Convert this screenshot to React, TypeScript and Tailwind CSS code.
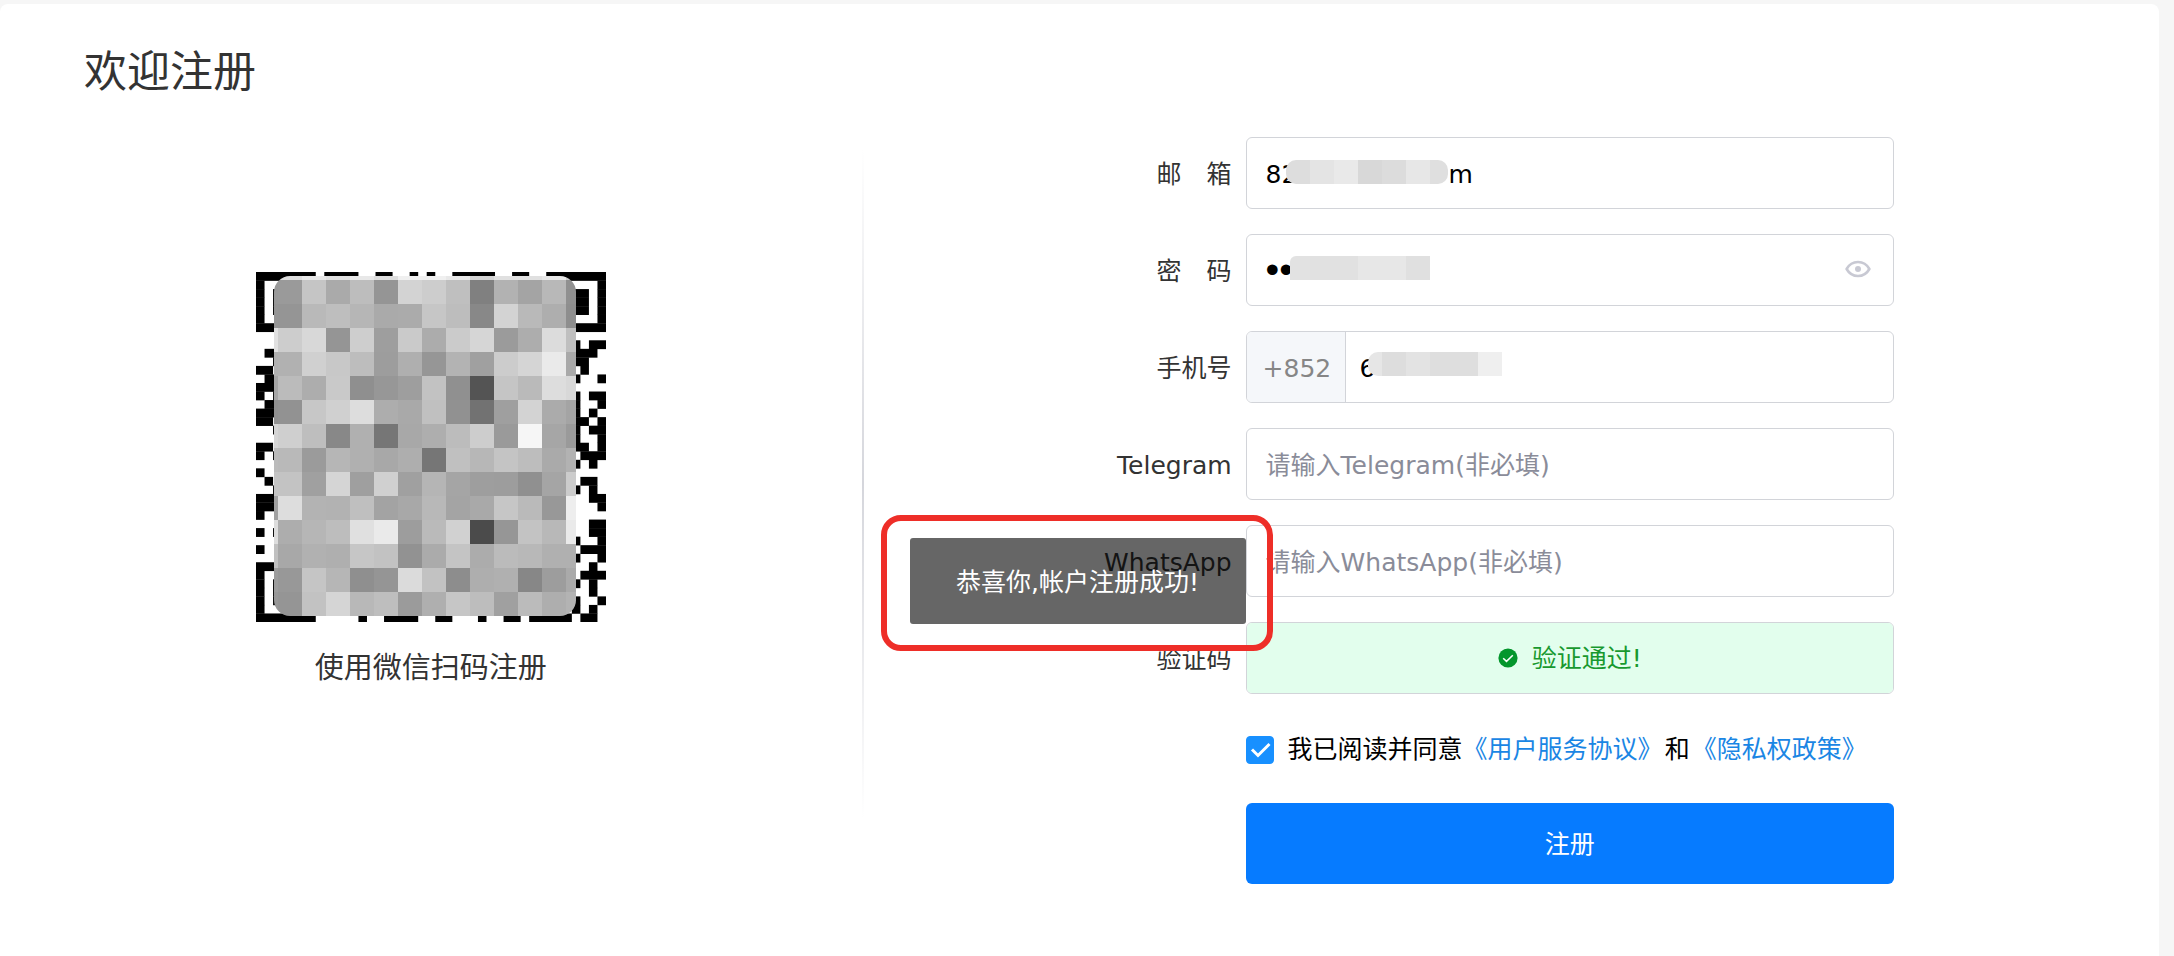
import { useState } from 'react';
import type { ReactNode } from 'react';

// QR modules that stay visible round the mosaic: [row, first column, length]
const QR_MODULES: [number, number, number][] = [
    [0, 0, 7], [0, 8, 4], [0, 14, 2], [0, 18, 1], [0, 20, 1], [0, 23, 5], [0, 30, 2], [0, 34, 7],
    [1, 0, 1], [1, 40, 1],
    [2, 0, 1], [2, 2, 1], [2, 37, 2], [2, 40, 1],
    [3, 0, 1], [3, 2, 1], [3, 37, 2], [3, 40, 1],
    [4, 0, 1], [4, 2, 1], [4, 37, 2], [4, 40, 1],
    [5, 0, 1], [5, 40, 1],
    [6, 0, 7], [6, 34, 7],
    [8, 37, 1], [8, 39, 2],
    [9, 1, 2], [9, 37, 3],
    [10, 2, 1], [10, 37, 2],
    [11, 0, 2], [11, 38, 1],
    [12, 1, 2], [12, 37, 1], [12, 40, 1],
    [13, 0, 3],
    [14, 0, 1], [14, 2, 1], [14, 37, 1], [14, 39, 2],
    [15, 1, 2], [15, 37, 1], [15, 40, 1],
    [16, 0, 3], [16, 37, 1], [16, 39, 1],
    [17, 0, 2], [17, 37, 2], [17, 40, 1],
    [18, 2, 1], [18, 37, 1], [18, 39, 2],
    [19, 37, 1], [19, 40, 1],
    [20, 0, 2], [20, 37, 2], [20, 40, 1],
    [21, 0, 1], [21, 2, 1], [21, 38, 3],
    [22, 37, 1], [22, 39, 1],
    [23, 0, 1],
    [24, 1, 1], [24, 38, 2],
    [25, 2, 1], [25, 37, 1], [25, 39, 1],
    [26, 0, 3], [26, 39, 2],
    [27, 0, 3], [27, 40, 1],
    [28, 0, 1],
    [29, 39, 2],
    [30, 0, 1], [30, 2, 1], [30, 39, 2],
    [31, 37, 1], [31, 40, 1],
    [32, 0, 1], [32, 38, 3],
    [33, 37, 1], [33, 40, 1],
    [34, 0, 7], [34, 39, 1],
    [35, 0, 1], [35, 38, 3],
    [36, 0, 1], [36, 2, 1], [36, 37, 1], [36, 39, 1],
    [37, 0, 1], [37, 2, 1], [37, 39, 1],
    [38, 0, 1], [38, 2, 1], [38, 37, 1], [38, 40, 1],
    [39, 0, 1], [39, 37, 1], [39, 39, 1],
    [40, 0, 7], [40, 12, 1], [40, 15, 4], [40, 21, 2], [40, 26, 1], [40, 29, 2], [40, 32, 5], [40, 38, 2],
];

// grey level of every mosaic cell, one row per line
const MOSAIC = [
    'dd dd e8 e0 e8 dd f0 f0 e8 d4 e0 e0 e8 cc',
    '99 9a c5 aa bd 95 d3 cd bf 80 b2 a4 b8 90',
    '96 95 b9 be b6 aa ab c6 bd 88 d3 b9 ae 8e',
    'e0 cd d8 95 ce 9e ca ac cb d6 9b ad dc bf',
    'b0 b1 d0 c8 bd 9d af 96 b3 a0 cc d5 ea a9',
    'a5 bb ad c9 8f 97 9e c2 90 54 c5 ba dd d8',
    '90 92 c7 d0 dd ad a9 c0 91 72 9f d3 ab a4',
    'd5 cf be 88 b0 76 a8 ae bc cd 9a f6 a6 9a',
    'bb b9 9b b6 b0 a8 ae 76 c0 b7 c4 bd aa b2',
    'c4 c3 a0 d5 9f d0 a0 b5 a5 9e 9d 90 a5 cc',
    'a0 dd b3 b2 bf a3 a8 b8 a4 a9 c6 ba 98 ee',
    'dd ad b6 bd e0 ea 9d ba d1 4b 96 c3 b8 ea',
    'c0 a8 b1 af c6 c2 92 ab c4 ac bb b8 b0 b0',
    '9d 98 c5 b6 8f 95 db c2 8d ae b0 87 9d aa',
    '98 95 c2 d5 b8 be 9b af c6 bd a0 bb ae b3',
].map((row) => row.split(' '));

const MODULE = 350 / 41;

const QrCode = () => (
    <svg viewBox="0 0 350 350" className="w-[350px] h-[350px]" role="img" aria-label="微信二维码">
        <defs>
            <clipPath id="mosaic">
                <rect x="18" y="4" width="302" height="340" rx="16" />
            </clipPath>
        </defs>
        {QR_MODULES.map(([row, col, len]) => (
            <rect
                key={`${row}-${col}`}
                x={col * MODULE}
                y={row * MODULE}
                width={len * MODULE}
                height={MODULE + 0.3}
                fill="#000"
            />
        ))}
        <g clipPath="url(#mosaic)" shapeRendering="crispEdges">
            {MOSAIC.map((row, r) =>
                row.map((grey, c) => (
                    <rect
                        key={`${r}-${c}`}
                        x={c * 24 - 2}
                        y={r * 24 - 16}
                        width="24"
                        height="24"
                        fill={`#${grey}${grey}${grey}`}
                    />
                ))
            )}
        </g>
    </svg>
);

const EyeIcon = () => (
    <svg viewBox="0 0 26 18" className="w-[26px] h-[18px]" fill="none">
        <path d="M1.600 9C4.400 4 8.400 2 13 2s8.600 2 11.400 7C21.600 14 17.600 16 13 16S4.400 14 1.600 9Z" stroke="#c8c9d3" strokeWidth="2.600" strokeLinejoin="round" />
        <circle cx="13" cy="9" r="3" fill="#c8c9d3" />
    </svg>
);

const PassedIcon = () => (
    <svg viewBox="0 0 20 20" className="w-5 h-5" fill="none">
        <circle cx="10" cy="10" r="9.600" fill="#04962c" />
        <path d="M5.200 10.200l3.300 3.200 6.300-6.200" stroke="#fff" strokeWidth="1.500" />
    </svg>
);

type FieldProps = {
    label: string;
    id: string;
    children: ReactNode;
};

const Field = ({ label, id, children }: FieldProps) => (
    <div className="flex items-center">
        <label htmlFor={id} className="w-[368px] mr-3.5 pt-1 shrink-0 text-right text-[#333]">
            {label}
        </label>
        <div className="relative flex flex-1 h-[72px] border border-[#d2d4d9] rounded-md overflow-hidden">
            {children}
        </div>
    </div>
);

const inputClass = 'flex-1 min-w-0 px-[19px] pt-1 bg-transparent text-black outline-none placeholder:text-[#8a8c99]';
// bigger bullets while the password is hidden
const hiddenClass = "flex-1 min-w-0 px-[19px] bg-transparent text-black outline-none font-['Liberation_Sans',sans-serif] text-[39px]";

const App = () => {
    const [email, setEmail] = useState('82' + ' '.repeat(19) + 'm');
    const [password, setPassword] = useState('123456789');
    const [phone, setPhone] = useState('6');
    const [showPassword, setShowPassword] = useState(false);
    const [agree, setAgree] = useState(true);

    return (
        <div className="flex min-h-screen bg-[#f6f6f6] pt-1 pr-[15px] font-['DejaVu_Sans','Noto_Sans_CJK_SC',sans-serif] text-[25px] leading-[30px]">
            <div className="flex-1 bg-white rounded-t-lg pt-[46px]">
                <h1 className="pl-[84px] text-[43px] leading-[44px] text-[#333]">欢迎注册</h1>

                <div className="flex mt-[43px]">
                    {/* WeChat */}
                    <div className="flex w-2/5">
                        <div className="flex flex-1 flex-col items-center pt-[135px]">
                            <QrCode />
                            <p className="mt-[31px] text-[29px] text-[#333]">使用微信扫码注册</p>
                        </div>
                        <div className="w-0.5 h-[670px] mt-3 bg-linear-to-b from-transparent via-[#d5d6dc] to-transparent"></div>
                    </div>

                    {/* Register form */}
                    <form className="relative flex-1 pr-[265px]" onSubmit={(e) => e.preventDefault()}>
                        <div className="flex flex-col gap-[25px]">
                            <Field label="邮　箱" id="email">
                                <input id="email" type="text" className={inputClass} value={email} onChange={(e) => setEmail(e.target.value)} />
                                <div className="absolute left-[39px] top-[22px] flex h-6 rounded-[10px] overflow-hidden">
                                    <span className="w-6 bg-[#dddddd]"></span>
                                    <span className="w-6 bg-[#e4e4e4]"></span>
                                    <span className="w-6 bg-[#e9e9e9]"></span>
                                    <span className="w-6 bg-[#d8d8d8]"></span>
                                    <span className="w-6 bg-[#dcdcdc]"></span>
                                    <span className="w-6 bg-[#e7e7e7]"></span>
                                    <span className="w-[18px] bg-[#dfdfdf]"></span>
                                </div>
                            </Field>
                            <Field label="密　码" id="password">
                                <input
                                    id="password"
                                    type={showPassword ? 'text' : 'password'}
                                    className={showPassword ? inputClass : hiddenClass}
                                    value={password}
                                    onChange={(e) => setPassword(e.target.value)}
                                />
                                <div className="absolute left-[43px] top-[21px] flex h-6 rounded-tl-md overflow-hidden">
                                    <span className="w-5 bg-[#e2e2e2]"></span>
                                    <span className="w-12 bg-[#e1e1e1]"></span>
                                    <span className="w-12 bg-[#e7e7e7]"></span>
                                    <span className="w-6 bg-[#e0e0e0]"></span>
                                </div>
                                <button type="button" aria-label="显示密码" className="pr-[22px] pb-0.5" onClick={() => setShowPassword(!showPassword)}>
                                    <EyeIcon />
                                </button>
                            </Field>
                            <Field label="手机号" id="phone">
                                <span className="flex items-center w-[99px] pl-4 pt-1 bg-[#f5f7fa] border-r border-[#d2d4d9] text-[#868686]">+852</span>
                                <input id="phone" type="tel" className="flex-1 min-w-0 px-3.5 pt-1 bg-transparent text-black outline-none" value={phone} onChange={(e) => setPhone(e.target.value)} />
                                <div className="absolute left-[121px] top-5 flex h-6 rounded-l-[10px] overflow-hidden">
                                    <span className="w-3.5 bg-[#e6e6e6]"></span>
                                    <span className="w-6 bg-[#dddddd]"></span>
                                    <span className="w-6 bg-[#e3e3e3]"></span>
                                    <span className="w-12 bg-[#dedede]"></span>
                                    <span className="w-6 bg-[#efefef]"></span>
                                </div>
                            </Field>
                            <Field label="Telegram" id="telegram">
                                <input id="telegram" type="text" className={inputClass} placeholder="请输入Telegram(非必填)" />
                            </Field>
                            <Field label="WhatsApp" id="whatsapp">
                                <input id="whatsapp" type="text" className={inputClass} placeholder="请输入WhatsApp(非必填)" />
                            </Field>
                            <Field label="验证码" id="captcha">
                                <output id="captcha" className="flex flex-1 items-center justify-center gap-3.5 bg-[#e2feed] text-[#18992f]">
                                    <PassedIcon />
                                    <span className="pt-0.5">验证通过!</span>
                                </output>
                            </Field>
                        </div>

                        <div className="pl-[382px]">
                            <div className="flex items-center mt-[42px] h-7">
                                <span className="relative flex">
                                    <input
                                        id="agree"
                                        type="checkbox"
                                        checked={agree}
                                        onChange={(e) => setAgree(e.target.checked)}
                                        className="appearance-none w-7 h-7 rounded-sm border border-[#d2d4d9] checked:border-[#1890ff] checked:bg-[#1890ff]"
                                    />
                                    {agree && (
                                        <svg viewBox="0 0 28 28" className="absolute inset-0 pointer-events-none" fill="none">
                                            <path d="M6 13.500l6 6L23.500 8" stroke="#fff" strokeWidth="3" />
                                        </svg>
                                    )}
                                </span>
                                <label htmlFor="agree" className="ml-3.5 whitespace-nowrap text-black">
                                    我已阅读并同意<a href="#terms" className="text-[#1a86e4]">《用户服务协议》</a>
                                    <span className="px-0.5">和</span>
                                    <a href="#privacy" className="text-[#1a86e4]">《隐私权政策》</a>
                                </label>
                            </div>
                            <button type="submit" className="w-full h-[81px] mt-[39px] pt-0.5 rounded-md bg-[#067bff] text-white">
                                注册
                            </button>
                        </div>

                        {/* Success message */}
                        <div className="absolute left-[17px] top-[378px] pt-[17px] pb-[21px] pl-[23px] pr-[21px] border-6 border-[#ee2e28] rounded-[20px]">
                            <div role="status" className="flex items-center justify-center w-[336px] h-[86px] pt-1 rounded-[3px] bg-black/60 text-white">
                                恭喜你,帐户注册成功!
                            </div>
                        </div>
                    </form>
                </div>
            </div>
        </div>
    );
};

export default App;
